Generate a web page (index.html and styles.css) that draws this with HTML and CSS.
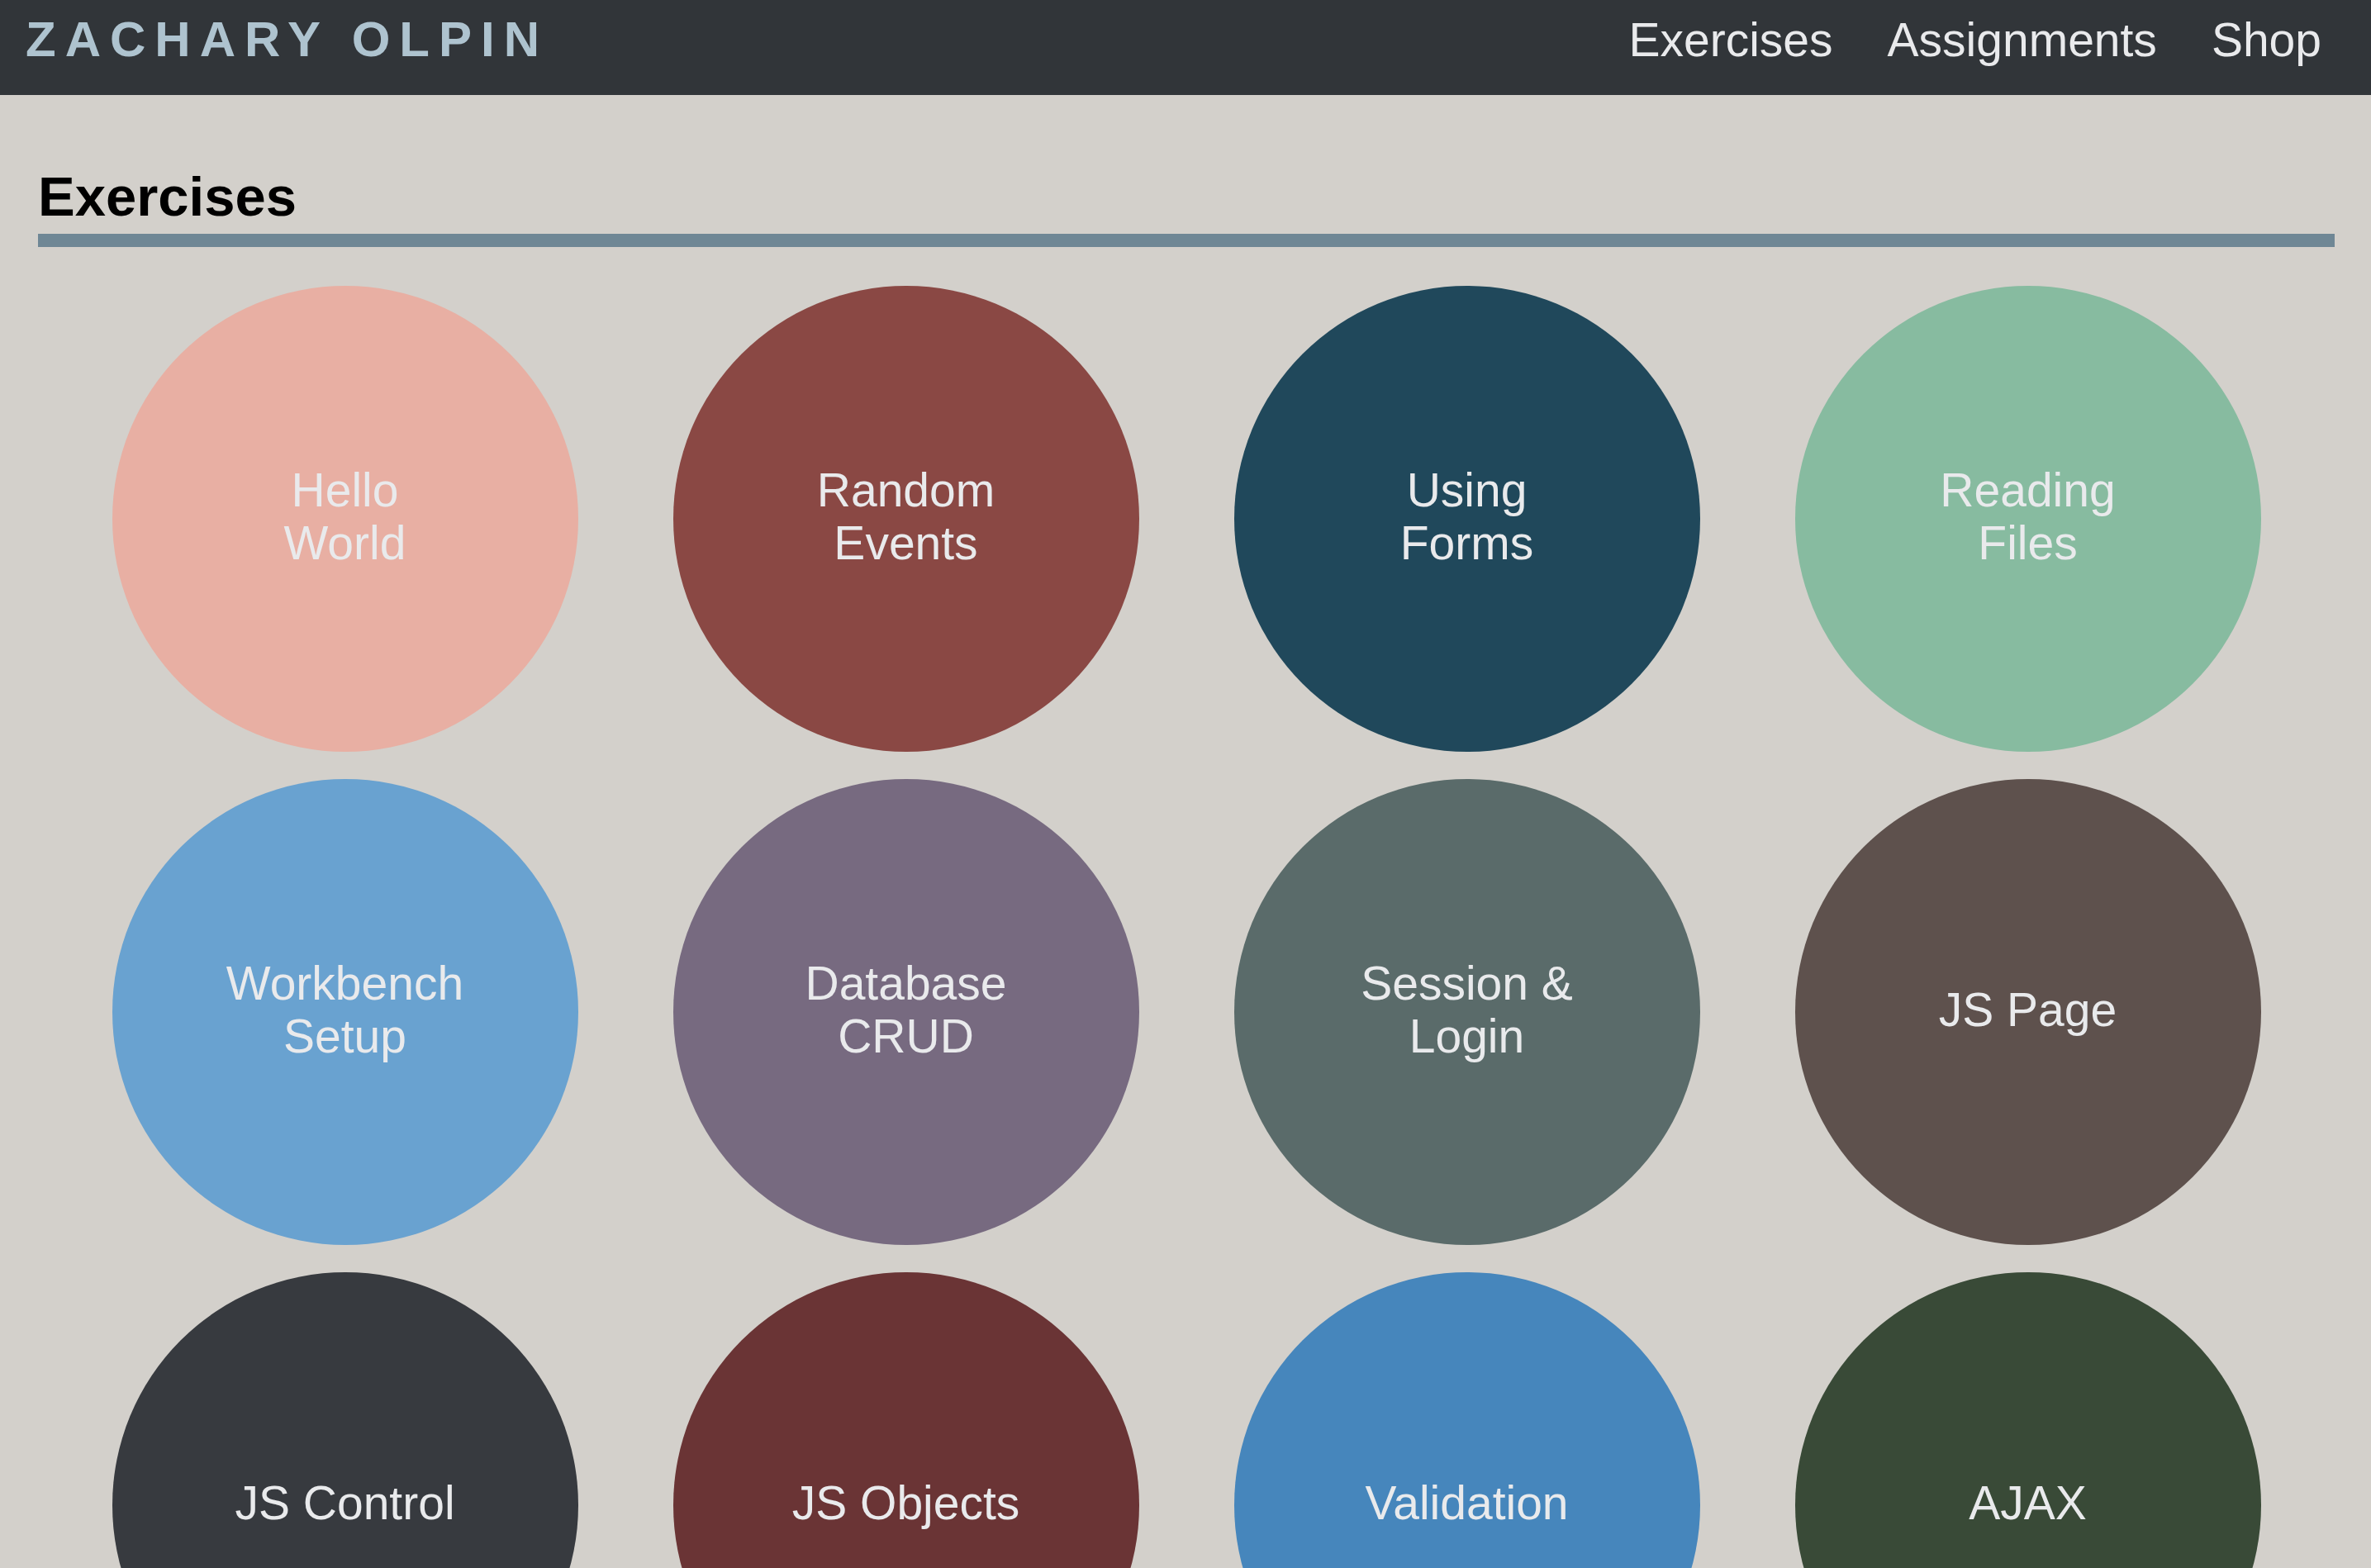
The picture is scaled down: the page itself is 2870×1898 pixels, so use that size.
FILE: index.html
```html
<!DOCTYPE html>
<html lang="en">
<head>
<meta charset="utf-8">
<title>Zachary Olpin - Exercises</title>
<link rel="stylesheet" href="styles.css">
</head>
<body>
<header class="site-header">
  <a class="logo" href="#">ZACHARY OLPIN</a>
  <nav class="nav">
    <a href="#">Exercises</a>
    <a href="#">Assignments</a>
    <a href="#">Shop</a>
  </nav>
</header>
<main class="content">
  <h1 class="page-title">Exercises</h1>
  <hr class="rule">
  <div class="grid">
    <a class="bubble c1" href="#">Hello<br>World</a>
    <a class="bubble c2" href="#">Random<br>Events</a>
    <a class="bubble c3" href="#">Using<br>Forms</a>
    <a class="bubble c4" href="#">Reading<br>Files</a>
    <a class="bubble c5" href="#">Workbench<br>Setup</a>
    <a class="bubble c6" href="#">Database<br>CRUD</a>
    <a class="bubble c7" href="#">Session &amp;<br>Login</a>
    <a class="bubble c8" href="#">JS Page</a>
    <a class="bubble c9" href="#">JS Control</a>
    <a class="bubble c10" href="#">JS Objects</a>
    <a class="bubble c11" href="#">Validation</a>
    <a class="bubble c12" href="#">AJAX</a>
  </div>
</main>
</body>
</html>
```

FILE: styles.css
```css
* { box-sizing: border-box; }
html, body {
  margin: 0;
  padding: 0;
  background: #d3d0cb;
  font-family: "Liberation Sans", Arial, Helvetica, sans-serif;
}
a { text-decoration: none; }

.site-header {
  height: 115px;
  background: #313539;
  display: flex;
  align-items: baseline;
  justify-content: space-between;
  padding: 18px 60px 0 31px;
}
.logo {
  font-size: 60px;
  line-height: 1;
  font-weight: bold;
  letter-spacing: 11px;
  color: #aec3cf;
}
.nav {
  display: flex;
  gap: 66px;
}
.nav a {
  font-size: 57px;
  line-height: 1;
  color: #e9eaec;
}

.content {
  padding: 0 44px 0 46px;
}
.page-title {
  margin: 0;
  padding-top: 89px;
  font-size: 67px;
  line-height: 1;
  font-weight: bold;
  color: #000;
}
.rule {
  margin: 12px 0 0;
  border: 0;
  height: 16px;
  background: #6f8795;
}
.grid {
  display: grid;
  grid-template-columns: repeat(4, 564px);
  justify-content: center;
  column-gap: 115px;
  row-gap: 33px;
  padding-top: 47px;
  padding-bottom: 40px;
}
.bubble {
  width: 564px;
  height: 564px;
  border-radius: 50%;
  display: flex;
  align-items: center;
  justify-content: center;
  text-align: center;
  padding-bottom: 7px;
  font-size: 57px;
  line-height: 64px;
  color: #e9eaec;
}
.c1 { background: #e8afa3; }
.c2 { background: #8a4844; }
.c3 { background: #20485b; }
.c4 { background: #87bba0; }
.c5 { background: #69a2d0; }
.c6 { background: #776a80; }
.c7 { background: #5a6b6a; }
.c8 { background: #5e514d; }
.c9 { background: #373a3f; }
.c10 { background: #6a3435; }
.c11 { background: #4686bc; }
.c12 { background: #394a37; }
```
